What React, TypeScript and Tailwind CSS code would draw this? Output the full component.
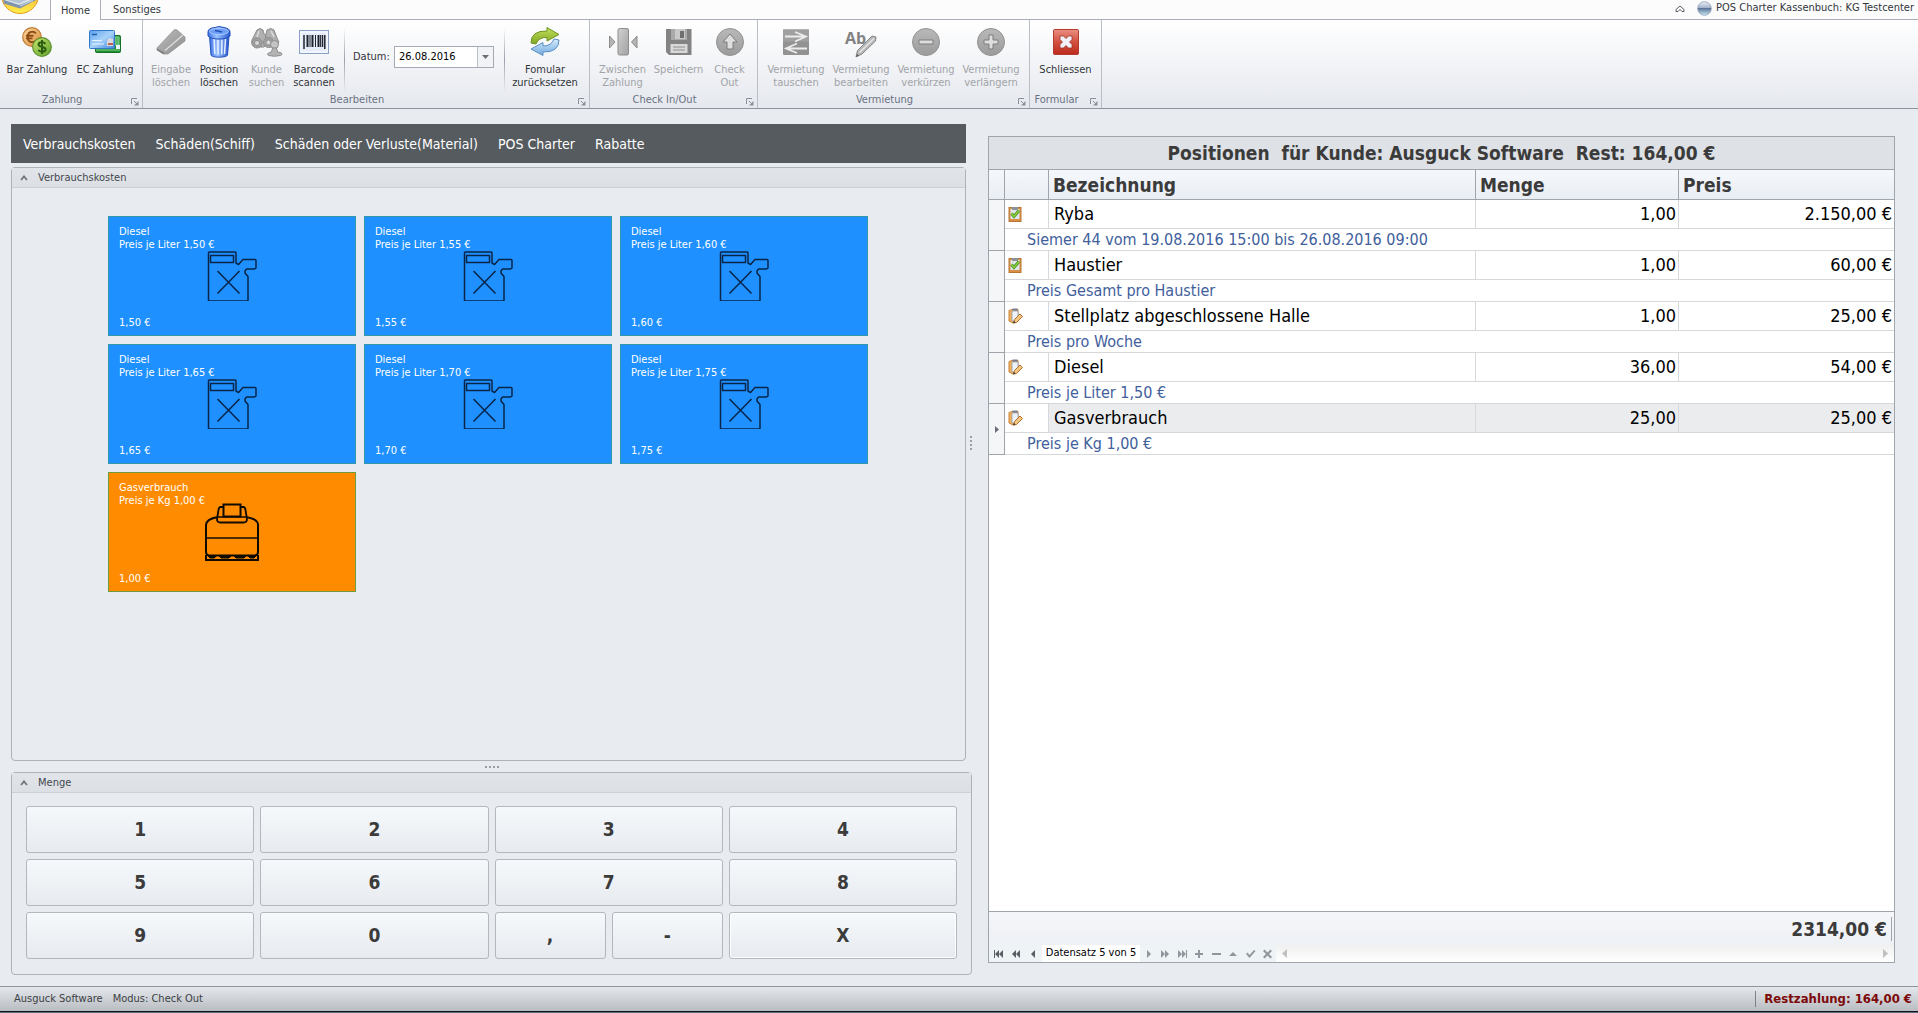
import { useState, ReactNode } from 'react'

interface RibbonItem {
  icon: ReactNode
  lines: string[]
  width: string
  disabled?: boolean
}

interface Position {
  name: string
  info: string
  menge: string
  preis: string
  done: boolean
}

const positionen: Position[] = [
  { name: 'Ryba', info: 'Siemer 44 vom 19.08.2016 15:00 bis 26.08.2016 09:00', menge: '1,00', preis: '2.150,00 €', done: true },
  { name: 'Haustier', info: 'Preis Gesamt pro Haustier', menge: '1,00', preis: '60,00 €', done: true },
  { name: 'Stellplatz abgeschlossene Halle', info: 'Preis pro Woche', menge: '1,00', preis: '25,00 €', done: false },
  { name: 'Diesel', info: 'Preis je Liter 1,50 €', menge: '36,00', preis: '54,00 €', done: false },
  { name: 'Gasverbrauch', info: 'Preis je Kg 1,00 €', menge: '25,00', preis: '25,00 €', done: false },
]

const dieselPreise = ['1,50 €', '1,55 €', '1,60 €', '1,65 €', '1,70 €', '1,75 €']
const kategorien = ['Verbrauchskosten', 'Schäden(Schiff)', 'Schäden oder Verluste(Material)', 'POS Charter', 'Rabatte']

/* ---------- Ribbon icons, 32x32 ---------- */

function CoinsIcon() {
  return (
    <svg width="32" height="32" viewBox="0 0 32 32">
      <defs>
        <linearGradient id="coinA" x1="0" y1="0" x2="1" y2="1"><stop offset="0" stopColor="#fbd9a0" /><stop offset="1" stopColor="#d98a35" /></linearGradient>
        <linearGradient id="coinB" x1="0" y1="0" x2="1" y2="1"><stop offset="0" stopColor="#c6e66e" /><stop offset="1" stopColor="#5fa02a" /></linearGradient>
      </defs>
      <circle cx="11" cy="11" r="9.3" fill="url(#coinA)" stroke="#c07a35" strokeWidth="1.2" />
      <path d="M15 7.500c-1-1.200-2.200-1.700-3.600-1.700-3 0-4.600 2.200-4.600 5.200s1.600 5.200 4.600 5.200c1.400 0 2.600-.5 3.600-1.700M5 9.800h7.500M5 12.400h6.500" fill="none" stroke="#8c4c14" strokeWidth="1.900" />
      <circle cx="21" cy="21" r="9.300" fill="url(#coinB)" stroke="#5d9130" strokeWidth="1.200" />
      <path d="M24.500 17.800c-.8-1-2-1.500-3.500-1.500-2 0-3.400.9-3.400 2.300 0 3.200 7 1.500 7 4.700 0 1.500-1.500 2.400-3.500 2.400-1.600 0-3-.6-3.800-1.700M21 14v14" fill="none" stroke="#2c5d12" strokeWidth="2" />
    </svg>
  )
}

function CardsIcon() {
  return (
    <svg width="34" height="32" viewBox="0 0 34 32">
      <defs><linearGradient id="card" x1="0" y1="0" x2="1" y2="1"><stop offset="0" stopColor="#5aa0ee" /><stop offset=".5" stopColor="#a8d2f8" /><stop offset="1" stopColor="#3f86dc" /></linearGradient></defs>
      <rect x="7.500" y="9.500" width="25" height="17" rx="1" fill="#23902f" stroke="#15702a" />
      <path d="M27 11h4v8h-4zM8 24h24" stroke="#7fd08a" strokeWidth="1" fill="#57b765" />
      <rect x="28" y="19" width="4" height="4" fill="#e8f5ff" />
      <rect x="1.500" y="4.500" width="25" height="18" rx="1" fill="url(#card)" stroke="#3377c8" />
      <path d="M4 8.500h5" stroke="#1f5cab" strokeWidth="1.500" />
      <path d="M4 14.500h10M4 18h12" stroke="#e7f4ff" strokeWidth="1" />
      <path d="M19 20v-5l2-3 4 1v7z" fill="#dcd8e0" />
      <path d="M20 18h5" stroke="#b56452" strokeWidth="2" />
    </svg>
  )
}

function EraserIcon() {
  return (
    <svg width="32" height="32" viewBox="0 0 32 32">
      <defs><linearGradient id="eraser" x1="0" y1="0" x2="1" y2="1"><stop offset="0" stopColor="#bdbdbd" /><stop offset="1" stopColor="#8d8d8d" /></linearGradient></defs>
      <path d="M2 22 19 4Q20.500 3 22 4L30 11v4L13 28H8.500L2 24z" fill="url(#eraser)" stroke="#929292" strokeWidth=".8" />
      <path d="M10 24.500 28 9" stroke="#dedede" strokeWidth="1.300" />
      <path d="M2 22.500 9 26.500v1.500H8l-6-4z" fill="#7d7d7d" />
    </svg>
  )
}

function TrashIcon() {
  return (
    <svg width="32" height="34" viewBox="0 0 32 34">
      <defs><linearGradient id="bin" x1="0" y1="0" x2="1" y2="0"><stop offset="0" stopColor="#3b70e6" /><stop offset=".4" stopColor="#9cc3ff" /><stop offset="1" stopColor="#2457cf" /></linearGradient></defs>
      <path d="M6.500 11h19.500l-1.500 19q-.5 2-8.200 2.200Q8.500 32 8 30z" fill="url(#bin)" stroke="#2450b9" />
      <path d="M11 14l.8 15M15 14.500v15M19 14.500l-.3 15M22.500 14l-1 15" stroke="#e6f0ff" strokeWidth="1.500" />
      <path d="M5 7Q5 3 12 2.500L16 1.500l5 1Q27 3.500 27 7v4q-3 3-11 3T5 11z" fill="url(#bin)" stroke="#2450b9" />
      <ellipse cx="16" cy="6.500" rx="9.500" ry="3.200" fill="#6da0f5" stroke="#b5d2ff" strokeWidth=".8" />
      <path d="M12 5.500l7 1.500" stroke="#2450b9" strokeWidth="1.500" />
    </svg>
  )
}

function BinocularsIcon() {
  return (
    <svg width="34" height="32" viewBox="0 0 34 32">
      <g fill="#b0b0b0" stroke="#8d8d8d" strokeWidth="1">
        <path d="M7 4q3-3 6 0l1 4 2 1V19q-2 3-5 2l-8-1q-2-3-1-6z" />
        <path d="M17 4q4-3 7 0l3 8q3 4 1 7l-8 2q-4-1-4-4V8z" />
        <circle cx="7" cy="17" r="5" fill="#a2a2a2" />
        <circle cx="7" cy="17" r="2.600" fill="#d6d6d6" />
        <circle cx="18.500" cy="16.500" r="5" fill="#a2a2a2" />
        <circle cx="18.500" cy="16.500" r="2.600" fill="#d6d6d6" />
        <circle cx="24.500" cy="18.500" r="4" fill="#c4c4c4" />
        <path d="M22.500 22h4l1 4 4 1q1 2-1 2.500-6 1.500-12 0-2-1.500 0-2.500l3-1z" fill="#b4b4b4" />
      </g>
      <path d="M9 5l-2 6M21 5l3 6" stroke="#dddddd" strokeWidth="1.500" />
    </svg>
  )
}

function BarcodeIcon() {
  return (
    <svg width="32" height="32" viewBox="0 0 32 32">
      <rect x="1.500" y="4.500" width="29" height="23" fill="#e4edf9" stroke="#8ba0c4" />
      <rect x="3" y="6" width="26" height="20" fill="none" stroke="#ffffff" />
      <path d="M6 9v14M24.500 9v12M26.800 9v14" stroke="#20242c" strokeWidth="1.500" />
      <path d="M9.500 9v12M14.500 9v12M20.500 9v12" stroke="#20242c" strokeWidth="2" />
      <path d="M12 9v12M17.500 9v12M22.600 9v12" stroke="#20242c" strokeWidth="1" />
    </svg>
  )
}

function RefreshIcon() {
  return (
    <svg width="32" height="32" viewBox="0 0 32 32">
      <defs>
        <linearGradient id="refA" x1="0" y1="0" x2="0" y2="1"><stop offset="0" stopColor="#c3df5c" /><stop offset="1" stopColor="#7fa823" /></linearGradient>
        <linearGradient id="refB" x1="0" y1="0" x2="0" y2="1"><stop offset="0" stopColor="#d5ebfb" /><stop offset="1" stopColor="#6fa9de" /></linearGradient>
      </defs>
      <path d="M2 17Q2 4.500 18 5V1.500L30 8.500 18 15v-3.500Q9.500 11 7 18z" fill="url(#refA)" stroke="#6f9325" strokeWidth="1" />
      <path d="M30 14Q30 26.500 14 26v3.500L2 23 14 16.500V20q8.500 0 11-7z" fill="url(#refB)" stroke="#5b8fc4" strokeWidth="1" />
    </svg>
  )
}

function BetweenIcon() {
  return (
    <svg width="32" height="32" viewBox="0 0 32 32">
      <defs><linearGradient id="bar" x1="0" y1="0" x2="1" y2="1"><stop offset="0" stopColor="#d0d0d0" /><stop offset="1" stopColor="#a2a2a2" /></linearGradient></defs>
      <rect x="11" y="2.500" width="10.500" height="26.500" rx="1.500" fill="url(#bar)" stroke="#8d8d8d" />
      <path d="M2.500 10v12l5.500-6zM30 10v12l-5.500-6z" fill="#b4b4b4" stroke="#8d8d8d" />
    </svg>
  )
}

function DiskIcon() {
  return (
    <svg width="32" height="32" viewBox="0 0 32 32">
      <path d="M3 3h25.500v26H6l-3-3z" fill="#838383" />
      <path d="M8 3h16v11H8z" fill="#a9a9a9" />
      <rect x="12" y="3" width="10" height="10" fill="#c9c9c9" />
      <rect x="17" y="5" width="4" height="7" fill="#6f6f6f" />
      <rect x="7.500" y="18" width="17" height="9" fill="#d9d9d9" />
      <path d="M10 21h12M10 24h12" stroke="#909090" strokeWidth="1" />
    </svg>
  )
}

// Round grey button with the given white symbol
function CircleIcon({ d }: { d: string }) {
  return (
    <svg width="32" height="32" viewBox="0 0 32 32">
      <defs><linearGradient id="disc" x1="0" y1="0" x2="0" y2="1"><stop offset="0" stopColor="#b9b9b9" /><stop offset="1" stopColor="#9b9b9b" /></linearGradient></defs>
      <circle cx="16" cy="16" r="13.500" fill="url(#disc)" stroke="#929292" />
      <path d={d} fill="#dedede" stroke="#7c7c7c" strokeWidth="1" strokeLinejoin="round" />
    </svg>
  )
}

function SwapIcon() {
  return (
    <svg width="32" height="32" viewBox="0 0 32 32">
      <rect x="3" y="3.500" width="26" height="25.500" rx="1" fill="#929292" />
      <rect x="3" y="3.500" width="26" height="12" fill="#a0a0a0" />
      <path d="M5 10.500h19M15 6l11 4.500L15 15.500M27 22.500H8M17 17.500 6 22.500l11 4.500" fill="none" stroke="#ececec" strokeWidth="1.800" />
    </svg>
  )
}

function RenameIcon() {
  return (
    <svg width="34" height="32" viewBox="0 0 34 32">
      <text x="1" y="18" className="text-[16px] font-bold" fontFamily="Open Sans, sans-serif" fill="#828282">Ab</text>
      <path d="M12 31l1.500-6.500L28 10l4 1-.5 4-13.500 13z" fill="#b8b8b8" stroke="#858585" />
      <path d="M15.500 26.500 30 12.500" stroke="#e6e6e6" strokeWidth="1.500" />
      <path d="M12 31l1-3 2 1.500z" fill="#606060" />
    </svg>
  )
}

function CloseIcon() {
  return (
    <svg width="32" height="32" viewBox="0 0 32 32">
      <defs><linearGradient id="close" x1="0" y1="0" x2="0" y2="1"><stop offset="0" stopColor="#ea8f83" /><stop offset=".5" stopColor="#d4503f" /><stop offset="1" stopColor="#bb2a1e" /></linearGradient></defs>
      <rect x="3.500" y="3.500" width="25" height="25" rx="1" fill="url(#close)" stroke="#b33a2d" />
      <path d="M10 13.500V10h3.500l2.500 2.500L18.500 10H22v3.500L19.500 16l2.500 2.500V22h-3.500L16 19.500 13.500 22H10v-3.500l2.500-2.500z" fill="#f3f1f7" stroke="#96392f" strokeWidth=".8" />
    </svg>
  )
}

/* ---------- Small icons ---------- */

function OrbLogo() {
  return (
    <svg width="40" height="15" viewBox="0 0 40 15">
      <defs><linearGradient id="orb" x1="0" y1="0" x2="0" y2="1"><stop offset=".5" stopColor="#f6b93a" /><stop offset="1" stopColor="#fff04a" /></linearGradient></defs>
      <circle cx="20" cy="-5" r="18.500" fill="url(#orb)" stroke="#e79a1c" />
      <path d="M3.500 0v3.500L20 8.500 36 0z" fill="#7f93ab" />
      <path d="M4 0 19 5 32 0z" fill="#dfe8ef" />
      <path d="M7 0l12 3.500L27 0z" fill="#b4c4d2" />
      <path d="M20 6l13-5.500" stroke="#c8d4de" strokeWidth="1.200" fill="none" />
    </svg>
  )
}

function SphereIcon() {
  return (
    <svg width="15" height="15" viewBox="0 0 15 15">
      <defs><linearGradient id="sphere" x1="0" y1="0" x2="0" y2="1"><stop offset="0" stopColor="#eef2f8" /><stop offset=".45" stopColor="#a3b1ca" /><stop offset=".5" stopColor="#5f7599" /><stop offset="1" stopColor="#c9ecf7" /></linearGradient></defs>
      <circle cx="7.500" cy="7.500" r="6.800" fill="url(#sphere)" stroke="#8d9bb4" strokeWidth=".8" />
    </svg>
  )
}

function LauncherIcon() {
  return (
    <svg width="8" height="8" viewBox="0 0 8 8">
      <path d="M.5 6V.5H6M3 3l3 3" fill="none" stroke="#8b9099" />
      <path d="M7.500 3v4.500H3z" fill="#8b9099" />
    </svg>
  )
}

function ChevronUp() {
  return (
    <svg width="8" height="6" viewBox="0 0 8 6"><path d="M1 5l3-3.500L7 5" fill="none" stroke="#70757c" strokeWidth="1.800" /></svg>
  )
}

function CanisterIcon() {
  return (
    <svg width="50" height="50" viewBox="0 0 50 50" fill="none" stroke="#0a2448" strokeWidth="1.500" strokeLinejoin="round">
      <path d="M1.500 2q0-1 1-1H28q1 0 1 1v10l2.500 1.500L36 8.500h12q1 0 1 1V17l-1.500 1H39.500L38 20v2l3 3.500v23.500q0 1-1 1h-37.500q-1 0-1-1z" />
      <rect x="3.500" y="4.500" width="23" height="7" />
      <path d="M10.500 20 32.500 42.500M32.500 20 10.500 42.500" />
    </svg>
  )
}

function GasIcon() {
  return (
    <svg width="56" height="58" viewBox="0 0 56 58" fill="none" stroke="#100a00" strokeWidth="2">
      <rect x="19.500" y="1.500" width="17" height="12" />
      <path d="M19 4h-2.500q-1.500 0-2 3L13 16q0 3.500 3.500 3.500h23q3.500 0 3.500-3.500l-1.500-9q-.5-3-2-3H37" strokeWidth="1.800" />
      <path d="M14 14Q2 16 2 22v27q0 3 3 3.500h46q3-.5 3-3.500V22q0-6-12-8" />
      <path d="M14 14h28" strokeWidth="1.500" />
      <path d="M2 35h52" strokeWidth="1.500" />
      <path d="M2 52v5h52v-5" />
      <path d="M4 53h8l-1.500 2H6zM15 53h12l-2 2h-8zM30 53h12l-2 2h-8zM44 53h8l-2 2h-4z" fill="#100a00" strokeWidth="1" />
    </svg>
  )
}

function ClipboardIcon({ done }: { done: boolean }) {
  return done ? (
    <svg width="14" height="16" viewBox="0 0 14 16">
      <rect x="1" y="1.500" width="12" height="14" fill="#d98f45" stroke="#b77634" />
      <rect x="2.500" y="3" width="9" height="10" fill="#dfe6ea" />
      <path d="M4 1h6v3H4z" fill="#8b949d" />
      <path d="M3.500 7.500 6 10.500l5-6" fill="none" stroke="#4f8a22" strokeWidth="3" />
      <path d="M3.500 7.500 6 10.500l5-6" fill="none" stroke="#86cf3e" strokeWidth="1.500" />
    </svg>
  ) : (
    <svg width="15" height="16" viewBox="0 0 15 16">
      <path d="M1 2.500l3-1h6v10L5 15l-4-2z" fill="#f0b261" stroke="#c98335" />
      <path d="M4 3h6v8l-3 2H4z" fill="#eef3f9" stroke="#8797ad" strokeWidth=".7" />
      <path d="M4.500 .500h5v2h-5z" fill="#6f7f99" />
      <path d="M5.500 15l1-3.500L12 6l2.500 2.500-6 6z" fill="#f3c684" stroke="#b06f2c" />
      <path d="M5 15.500l1-2.500 1.500 1.500z" fill="#333" />
    </svg>
  )
}

/* ---------- Ribbon ---------- */

const plus = 'M14 9h4v5h5v4h-5v5h-4v-5H9v-4h5z'
const minus = 'M9 14h14v4H9z'
const arrowUp = 'M16 8l7 8h-4v7h-6v-7H9z'

function RibbonButton({ icon, lines, width, disabled }: RibbonItem) {
  return (
    <button
      type="button"
      disabled={disabled}
      className={`flex shrink-0 flex-col items-center text-center ${width} ${disabled ? 'text-[#a2a4a8]' : 'text-[#33363b]'}`}
    >
      <span className="mb-[3px] flex h-9 items-center">{icon}</span>
      {lines.map((l) => <span key={l} className="whitespace-nowrap leading-[13px]">{l}</span>)}
    </button>
  )
}

function RibbonGroup({ label, width, children }: { label: string; width: string; children: ReactNode }) {
  return (
    <section className={`flex shrink-0 flex-col border-r border-[#b9bec7] ${width}`}>
      <div className="flex flex-1 items-start justify-center pt-1">{children}</div>
      <div className="flex h-[15px] items-center">
        <span className="flex-1 text-center text-[#6a7283]">{label}</span>
        <button type="button" aria-label={`${label} Optionen`} className="flex w-[18px] justify-end pt-0.5 pr-[3px]"><LauncherIcon /></button>
      </div>
    </section>
  )
}

function Separator() {
  return <div className="mt-1 ml-1.5 h-16 w-px bg-linear-to-b from-transparent via-[#9aa0aa] to-transparent" />
}

function Ribbon() {
  const [datum, setDatum] = useState('26.08.2016')

  return (
    <header className="text-[11px]">
      <div className="flex h-5 items-stretch border-b border-[#a9adb5] bg-[#fcfcfd] text-[#33363b]">
        <div className="w-[50px]"><OrbLogo /></div>
        <button type="button" className="-mb-px w-[51px] border-x border-[#a9adb5] bg-white pt-0.5">Home</button>
        <button type="button" className="w-[72px] pt-0.5">Sonstiges</button>
        <div className="ml-auto flex items-center gap-1 pr-1 pb-0.5">
          <button type="button" aria-label="Menüband minimieren" className="mr-2">
            <svg width="10" height="8" viewBox="0 0 10 8"><path d="M1 4.500 5 1l4 3.500v2H7L5 4.500 3 6.500H1z" fill="#fff" stroke="#50555d" /></svg>
          </button>
          <SphereIcon />
          <span>POS Charter Kassenbuch: KG Testcenter</span>
        </div>
      </div>
      <div className="flex h-[89px] border-b border-[#8f949d] bg-linear-to-b from-white to-[#e5e8ee]">
        <RibbonGroup label="Zahlung" width="w-[143px]">
          <RibbonButton icon={<CoinsIcon />} lines={['Bar Zahlung']} width="w-[68px]" />
          <RibbonButton icon={<CardsIcon />} lines={['EC Zahlung']} width="w-[68px]" />
        </RibbonGroup>
        <RibbonGroup label="Bearbeiten" width="w-[447px]">
          <RibbonButton icon={<EraserIcon />} lines={['Eingabe', 'löschen']} width="w-12" disabled />
          <RibbonButton icon={<TrashIcon />} lines={['Position', 'löschen']} width="w-12" />
          <RibbonButton icon={<BinocularsIcon />} lines={['Kunde', 'suchen']} width="w-[47px]" disabled />
          <RibbonButton icon={<BarcodeIcon />} lines={['Barcode', 'scannen']} width="w-12" />
          <Separator />
          <div className="flex items-center pt-[22px] pr-1 pl-2">
            <label htmlFor="datum" className="w-[41px] text-[#33363b]">Datum:</label>
            <div className="flex h-[22px] w-[100px] border border-[#a5abb5] bg-white">
              <input id="datum" value={datum} onChange={(e) => setDatum(e.target.value)} className="min-w-0 flex-1 px-1 text-black outline-none" />
              <button type="button" aria-label="Kalender öffnen" className="flex w-4 items-center justify-center border-l border-[#b9bec7] bg-[#f1f3f6]">
                <svg width="7" height="4" viewBox="0 0 7 4"><path d="M0 0h7L3.500 4z" fill="#6a6f77" /></svg>
              </button>
            </div>
          </div>
          <Separator />
          <RibbonButton icon={<RefreshIcon />} lines={['Fomular', 'zurücksetzen']} width="w-20" />
        </RibbonGroup>
        <RibbonGroup label="Check In/Out" width="w-[168px]">
          <RibbonButton icon={<BetweenIcon />} lines={['Zwischen', 'Zahlung']} width="w-14" disabled />
          <RibbonButton icon={<DiskIcon />} lines={['Speichern']} width="w-14" disabled />
          <RibbonButton icon={<CircleIcon d={arrowUp} />} lines={['Check', 'Out']} width="w-[46px]" disabled />
        </RibbonGroup>
        <RibbonGroup label="Vermietung" width="w-[272px]">
          <RibbonButton icon={<SwapIcon />} lines={['Vermietung', 'tauschen']} width="w-[65px]" disabled />
          <RibbonButton icon={<RenameIcon />} lines={['Vermietung', 'bearbeiten']} width="w-[65px]" disabled />
          <RibbonButton icon={<CircleIcon d={minus} />} lines={['Vermietung', 'verkürzen']} width="w-[65px]" disabled />
          <RibbonButton icon={<CircleIcon d={plus} />} lines={['Vermietung', 'verlängern']} width="w-[65px]" disabled />
        </RibbonGroup>
        <RibbonGroup label="Formular" width="w-[72px]">
          <RibbonButton icon={<CloseIcon />} lines={['Schliessen']} width="w-16" />
        </RibbonGroup>
      </div>
    </header>
  )
}

/* ---------- Left side ---------- */

function Panel({ title, className, children }: { title: string; className: string; children: ReactNode }) {
  return (
    <section className={`rounded-sm border border-[#adb2b9] ${className}`}>
      <h2 className="flex h-5 items-center gap-2.5 border-b border-[#cdd1d6] bg-linear-to-b from-[#e1e5e9] to-[#dcdfe4] px-2 text-[11px] text-[#44484e]">
        <ChevronUp />
        <span className="pt-0.5">{title}</span>
      </h2>
      {children}
    </section>
  )
}

function Tile({ name, info, preis, gas }: { name: string; info: string; preis: string; gas?: boolean }) {
  return (
    <button
      type="button"
      className={`relative flex h-[120px] flex-col border px-2.5 pt-2 pb-1.5 text-left text-[11px] leading-[13px] text-white ${gas ? 'border-[#6f9a3c] bg-[#ff8c00]' : 'border-[#2f97a8] bg-[#1e90ff]'}`}
    >
      <span>{name}</span>
      <span>{info}</span>
      <span className="mt-auto">{preis}</span>
      <span className="absolute inset-0 flex items-center justify-center">{gas ? <GasIcon /> : <CanisterIcon />}</span>
    </button>
  )
}

function Key({ label, active }: { label: string; active?: boolean }) {
  return (
    <button
      type="button"
      className={`h-[47px] rounded-[3px] border border-[#b4b8be] bg-linear-to-b from-[#f5f9fc] to-[#e7eaee] text-[19px] font-bold text-[#3b3b3b] hover:to-white ${active ? 'inset-ring inset-ring-white' : ''}`}
    >
      {label}
    </button>
  )
}

function Grip({ vertical }: { vertical?: boolean }) {
  return (
    <div className={`flex justify-center gap-0.5 ${vertical ? 'w-[6px] flex-col items-end' : 'h-[11px] items-center'}`}>
      {[0, 1, 2, 3].map((i) => <span key={i} className="size-0.5 bg-[#9a9fa7]" />)}
    </div>
  )
}

function Auswahl() {
  return (
    <div className="flex flex-col">
      <div className="flex flex-1">
        <div className="flex flex-1 flex-col gap-1">
          <nav className="flex h-[39px] items-center gap-5 bg-[#565b60] px-3 pt-0.5 text-[14px] text-white">
            {kategorien.map((k) => <a key={k} href="#" className="whitespace-nowrap">{k}</a>)}
          </nav>
          <Panel title="Verbrauchskosten" className="flex-1">
            <div className="grid grid-cols-[repeat(3,248px)] gap-2 px-24 pt-7 pb-4">
              {dieselPreise.map((p) => <Tile key={p} name="Diesel" info={`Preis je Liter ${p}`} preis={p} />)}
              <Tile name="Gasverbrauch" info="Preis je Kg 1,00 €" preis="1,00 €" gas />
            </div>
          </Panel>
        </div>
        <Grip vertical />
      </div>
      <Grip />
      <Panel title="Menge" className="h-[203px]">
        <div className="grid grid-cols-4 gap-1.5 px-3.5 pt-[13px]">
          {['1', '2', '3', '4', '5', '6', '7', '8', '9', '0'].map((n) => <Key key={n} label={n} />)}
          <div className="grid grid-cols-2 gap-1.5">
            <Key label="," />
            <Key label="-" />
          </div>
          <Key label="X" active />
        </div>
      </Panel>
    </div>
  )
}

/* ---------- Right side ---------- */

function NavButton({ label, d, dark }: { label: string; d: string; dark?: boolean }) {
  return (
    <button type="button" aria-label={label} className="flex w-[17px] items-center justify-center">
      <svg width="11" height="10" viewBox="0 0 11 10"><path d={d} fill={dark ? '#5a5f66' : '#92969c'} /></svg>
    </button>
  )
}

function Positionen() {
  const [aktiv, setAktiv] = useState(4)
  const kopf = 'border-r border-b border-[#a0a5ac] bg-linear-to-b from-[#f5f8fb] to-[#e9eef4] p-0 pl-1 text-left font-bold'

  return (
    <section className="mt-3 mb-3 flex flex-col border border-[#a0a5ac] bg-white">
      <h1 className="flex h-8 items-center justify-center bg-[#dee1e5] text-[19px] font-bold whitespace-pre text-[#3b3b3b]">
        Positionen  für Kunde: Ausguck Software  Rest: 164,00 €
      </h1>
      <table className="w-full table-fixed border-separate border-spacing-0 border-t border-[#a0a5ac] text-[18px] text-black">
        <colgroup>
          <col className="w-4" />
          <col className="w-11" />
          <col />
          <col className="w-[203px]" />
          <col className="w-[215px]" />
        </colgroup>
        <thead className="text-[19px] leading-7 text-[#3b3b3b]">
          <tr className="h-[30px]">
            <th className={kopf} />
            <th className={kopf} />
            <th className={kopf}>Bezeichnung</th>
            <th className={kopf}>Menge</th>
            <th className="border-b border-[#a0a5ac] bg-linear-to-b from-[#f5f8fb] to-[#e9eef4] p-0 pl-1 text-left font-bold">Preis</th>
          </tr>
        </thead>
        {positionen.map((p, i) => {
          const zelle = `border-b border-[#d6d8db] p-0 ${i === aktiv ? 'bg-[#ebecee]' : ''}`
          return (
            <tbody key={p.name} onClick={() => setAktiv(i)}>
              <tr className="h-[29px] leading-[28px]">
                <td rowSpan={2} className="border-r border-b border-[#a0a5ac] bg-[#f4f6f8] p-0">
                  {i === aktiv && <svg className="mx-auto" width="4" height="7" viewBox="0 0 4 7"><path d="M0 0v7l4-3.500z" fill="#6a6f77" /></svg>}
                </td>
                <td className="border-r border-b border-[#d6d8db] p-0 pl-[3px]"><ClipboardIcon done={p.done} /></td>
                <td className={`${zelle} border-r`}><div className="truncate pl-[5px]">{p.name}</div></td>
                <td className={`${zelle} border-r text-right`}><span className="pr-0.5">{p.menge}</span></td>
                <td className={`${zelle} text-right`}><span className="pr-0.5">{p.preis}</span></td>
              </tr>
              <tr className="h-[22px] text-[16px] leading-[21px] text-[#41609c]">
                <td colSpan={4} className="border-b border-[#d6d8db] p-0 pl-[22px]">{p.info}</td>
              </tr>
            </tbody>
          )
        })}
      </table>
      <div className="mt-auto flex h-[34px] items-center justify-end border-t border-[#a0a5ac] bg-linear-to-b from-[#f5f6f9] to-[#eef1f5] pr-0.5">
        <span className="border-r border-[#a0a5ac] pr-1 text-[19px] leading-6 font-bold text-[#3b3b3b]">2314,00 €</span>
      </div>
      <div className="flex h-[17px] bg-[#eef3f6] pl-0.5 text-[11px]">
        <NavButton label="Erster" dark d="M0 1h1v8H0zM1 5l4-4v8zM5 5l4-4v8z" />
        <NavButton label="Seite zurück" dark d="M1 5l4-4v8zM5 5l4-4v8z" />
        <NavButton label="Zurück" dark d="M3 5l4-4v8z" />
        <span className="flex w-[98px] items-center justify-center bg-white whitespace-nowrap text-black">Datensatz 5 von 5</span>
        <NavButton label="Weiter" d="M4 1l4 4-4 4z" />
        <NavButton label="Seite vor" d="M1 1l4 4-4 4zM5 1l4 4-4 4z" />
        <NavButton label="Letzter" d="M1 1l4 4-4 4zM5 1l4 4-4 4zM9 1h1v8H9z" />
        <NavButton label="Anfügen" d="M4 1h2v3h3v2H6v3H4V6H1V4h3z" />
        <NavButton label="Löschen" d="M1 4h9v2H1z" />
        <NavButton label="Bearbeiten" d="M1 7l4-4 4 4z" />
        <NavButton label="Übernehmen" d="M1 5l1.500-1.500L4.500 6 9 1l1.500 1L4.500 9z" />
        <NavButton label="Abbrechen" d="M1 2l1.500-1.500 3 3 3-3L10 2 7 5l3 3-1.500 1.500-3-3-3 3L1 8l3-3z" />
        <div className="flex flex-1 items-center justify-between bg-linear-to-b from-[#f0f0f0] to-white px-1.5">
          <svg width="5" height="9" viewBox="0 0 5 9"><path d="M5 0v9L0 4.500z" fill="#c0c0c0" /></svg>
          <svg width="5" height="9" viewBox="0 0 5 9"><path d="M0 0v9l5-4.500z" fill="#c0c0c0" /></svg>
        </div>
      </div>
    </section>
  )
}

export default function App() {
  return (
    <div className="flex min-h-screen flex-col bg-[#e8ebf0] font-['DejaVu_Sans_Condensed','Noto_Sans',sans-serif]">
      <Ribbon />
      <main className="grid flex-1 grid-cols-[961fr_907fr] gap-4 pt-[15px] pr-[23px] pl-[11px]">
        <Auswahl />
        <Positionen />
      </main>
      <footer className="mt-[11px] flex h-[25px] items-center gap-2.5 border-t border-[#8f949d] bg-linear-to-b from-[#e4e7eb] to-[#b9bdc2] pr-1.5 pl-3.5 text-[11px] text-[#3b3f45]">
        <span>Ausguck Software</span>
        <span>Modus: Check Out</span>
        <span className="ml-auto border-l border-[#7d828a] pl-2 text-[13px] leading-4 font-bold text-[#7d0a0a]">Restzahlung: 164,00 €</span>
      </footer>
      <div className="h-0.5 border-t border-[#10131a] bg-[#5b6b80]" />
    </div>
  )
}
